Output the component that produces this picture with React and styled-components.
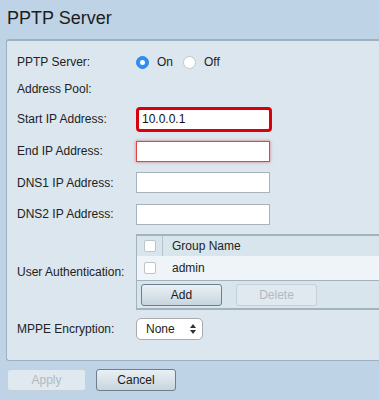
import React from "react";
import styled, { createGlobalStyle } from "styled-components";

const GlobalStyle = createGlobalStyle`
  html, body {
    margin: 0;
    padding: 0;
    background: #bed3e6;
    font-family: "Liberation Sans", Arial, Helvetica, sans-serif;
    font-size: 12px;
    color: #222;
    overflow: hidden;
  }
`;

const Page = styled.div`
  width: 379px;
  height: 400px;
  background: #bed3e6;
  overflow: hidden;
`;

const Title = styled.h1`
  margin: 0;
  padding: 7px 0 10px 7px;
  font-size: 18px;
  line-height: 22px;
  font-weight: normal;
  color: #1c1c1c;
`;

const Panel = styled.div`
  margin-left: 6px;
  width: 420px;
  box-sizing: border-box;
  background: #dbe6ee;
  border: 1px solid #9cb0bf;
  border-top-width: 2px;
  border-right: none;
  border-radius: 3px 0 0 3px;
  padding: 8px 0 16px 10px;
  display: flex;
  flex-direction: column;
`;

const Row = styled.div`
  display: flex;
  align-items: center;
  height: ${(p) => p.h}px;
`;

const Label = styled.div`
  width: 119px;
  flex: 0 0 119px;
  color: #222;
`;

const RadioGroup = styled.div`
  display: flex;
  align-items: center;
`;

const Radio = styled.span`
  width: 13px;
  height: 13px;
  border-radius: 50%;
  box-sizing: border-box;
  display: inline-flex;
  align-items: center;
  justify-content: center;
  background: ${(p) => (p.checked ? "#2f8ff2" : "#fff")};
  border: 1px solid ${(p) => (p.checked ? "#2a86e8" : "#c6c6c6")};
  margin-left: ${(p) => p.ml || 0}px;

  &::after {
    content: "";
    display: ${(p) => (p.checked ? "block" : "none")};
    width: 5px;
    height: 5px;
    border-radius: 50%;
    background: #fff;
  }
`;

const RadioText = styled.span`
  margin-left: 8px;
`;

const TextInput = styled.div`
  box-sizing: border-box;
  width: ${(p) => (p.highlight ? 136 : 134)}px;
  height: ${(p) => (p.highlight ? 25 : 21)}px;
  background: #fff;
  border: ${(p) =>
    p.highlight ? "3px solid #d8000c" : p.error ? "1px solid #e04545" : "1px solid #a9b3ba"};
  border-radius: ${(p) => (p.highlight ? 4 : 0)}px;
  box-shadow: ${(p) => (p.error ? "0 0 3px rgba(230, 40, 40, 0.6)" : "none")};
  padding-left: ${(p) => (p.highlight ? 3 : 5)}px;
  display: flex;
  align-items: center;
  font-size: 12px;
  color: #111;
`;

const Table = styled.div`
  width: 300px;
  border: 1px solid #a3b3bd;
  border-top-width: 2px;
  border-bottom-width: 2px;
  border-right: none;
  background: #d9e5ec;
`;

const TableRow = styled.div`
  display: flex;
  align-items: center;
  height: ${(p) => p.h}px;
  background: ${(p) => (p.light ? "#eef4f8" : "#d9e5ec")};
  border-bottom: ${(p) => (p.line ? "1px solid #a3b3bd" : "none")};
`;

const CheckCell = styled.div`
  width: 26px;
  height: 100%;
  display: flex;
  align-items: center;
  justify-content: center;
  box-sizing: border-box;
  border-right: ${(p) => (p.divider ? "1px solid #b3c2cb" : "none")};
`;

const Checkbox = styled.span`
  width: 12px;
  height: 12px;
  box-sizing: border-box;
  background: #fff;
  border: 1px solid #c0c4c8;
  border-radius: 2px;
`;

const CellText = styled.div`
  padding-left: 9px;
`;

const ButtonBar = styled.div`
  display: flex;
  align-items: center;
  gap: 14px;
  height: 27px;
  padding-left: 4px;
`;

const Button = styled.button`
  box-sizing: border-box;
  width: ${(p) => p.w || 81}px;
  height: 22px;
  font-family: inherit;
  font-size: 12px;
  border-radius: 3px;
  padding: 0;
  color: ${(p) => (p.disabled ? "#b1b9bf" : "#1a1a1a")};
  background: ${(p) =>
    p.disabled ? "#e0e9ef" : "linear-gradient(#e9f0f5, #c8d5de)"};
  border: 1px solid ${(p) => (p.disabled ? "#c5d0d7" : "#6d7f8d")};
`;

const Select = styled.div`
  box-sizing: border-box;
  width: 67px;
  height: 22px;
  background: #fff;
  border: 1px solid #a8aaac;
  border-radius: 5px;
  display: flex;
  align-items: center;
  justify-content: space-between;
  padding: 0 6px 0 9px;
`;

const Footer = styled.div`
  display: flex;
  gap: 10px;
  padding: 8px 0 0 7px;
`;

function Arrows() {
  return (
    <svg width="6" height="10" viewBox="0 0 6 10">
      <path d="M0 4 L3 0 L6 4 Z" fill="#333" />
      <path d="M0 6 L3 10 L6 6 Z" fill="#333" />
    </svg>
  );
}

export default function App() {
  return (
    <Page>
      <GlobalStyle />
      <Title>PPTP Server</Title>
      <Panel>
        <Row h={26}>
          <Label>PPTP Server:</Label>
          <RadioGroup>
            <Radio checked />
            <RadioText>On</RadioText>
            <Radio ml={10} />
            <RadioText>Off</RadioText>
          </RadioGroup>
        </Row>
        <Row h={28}>
          <Label>Address Pool:</Label>
        </Row>
        <Row h={32}>
          <Label>Start IP Address:</Label>
          <TextInput highlight>10.0.0.1</TextInput>
        </Row>
        <Row h={32}>
          <Label>End IP Address:</Label>
          <TextInput error />
        </Row>
        <Row h={31}>
          <Label>DNS1 IP Address:</Label>
          <TextInput />
        </Row>
        <Row h={32}>
          <Label>DNS2 IP Address:</Label>
          <TextInput />
        </Row>
        <Row h={84}>
          <Label>User Authentication:</Label>
          <Table>
            <TableRow h={20}>
              <CheckCell divider>
                <Checkbox />
              </CheckCell>
              <CellText>Group Name</CellText>
            </TableRow>
            <TableRow h={24} light line>
              <CheckCell>
                <Checkbox />
              </CheckCell>
              <CellText>admin</CellText>
            </TableRow>
            <ButtonBar>
              <Button>Add</Button>
              <Button disabled>Delete</Button>
            </ButtonBar>
          </Table>
        </Row>
        <Row h={30}>
          <Label>MPPE Encryption:</Label>
          <Select>
            <span>None</span>
            <Arrows />
          </Select>
        </Row>
      </Panel>
      <Footer>
        <Button w={79} disabled>
          Apply
        </Button>
        <Button w={80}>Cancel</Button>
      </Footer>
    </Page>
  );
}
